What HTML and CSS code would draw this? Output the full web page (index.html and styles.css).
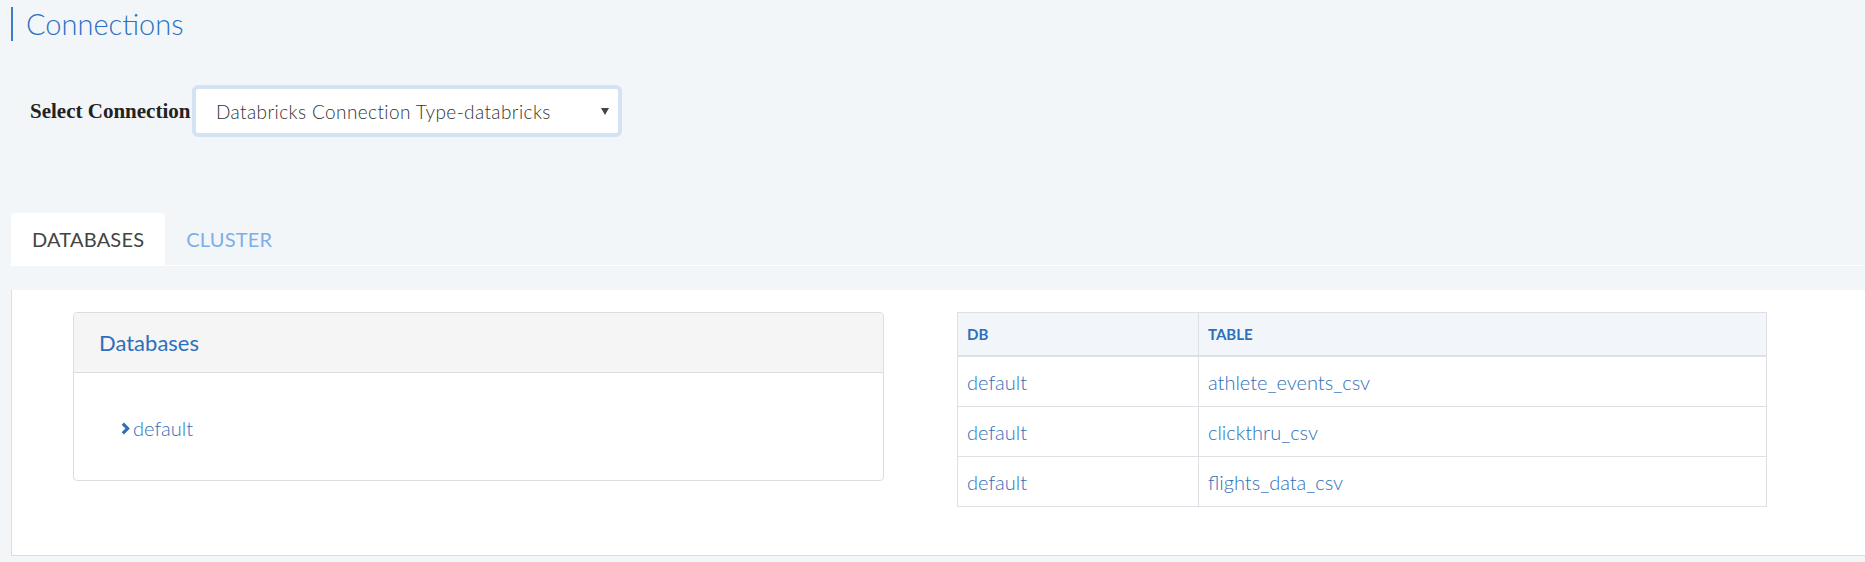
FILE: index.html
```html
<!DOCTYPE html>
<html>
<head>
<meta charset="utf-8">
<link rel="stylesheet" href="styles.css">
</head>
<body>
  <h1 class="page-title">Connections</h1>

  <div class="select-row">
    <label class="select-label">Select Connection</label>
    <div class="select-box">
      <span class="select-value">Databricks Connection Type-databricks</span>
      <svg class="select-arrow" width="8" height="7" viewBox="0 0 8 7"><path d="M0 0 H8 L4 7 Z" fill="#444"/></svg>
    </div>
  </div>

  <div class="tabs">
    <div class="tab active">DATABASES</div>
    <div class="tab">CLUSTER</div>
  </div>

  <div class="panel">
    <div class="card">
      <div class="card-header">Databases</div>
      <div class="card-body">
        <div class="tree-item">
          <svg class="chevron" width="9" height="13" viewBox="0 0 9 13"><path d="M1.8 1.6 L6.6 6.5 L1.8 11.4" fill="none" stroke="#2f6fba" stroke-width="3.2"/></svg><span>default</span>
        </div>
      </div>
    </div>

    <table class="data-table">
      <thead>
        <tr><th class="col-db">DB</th><th>TABLE</th></tr>
      </thead>
      <tbody>
        <tr><td>default</td><td>athlete_events_csv</td></tr>
        <tr><td>default</td><td>clickthru_csv</td></tr>
        <tr><td>default</td><td>flights_data_csv</td></tr>
      </tbody>
    </table>
  </div>
</body>
</html>
```

FILE: styles.css
```css
html, body {
  margin: 0;
  padding: 0;
}
body {
  background: #f3f6f9;
  font-family: Lato, "Open Sans", sans-serif;
  width: 1865px;
  height: 562px;
  overflow: hidden;
}
.page-title {
  margin: 7px 0 0 11px;
  padding-left: 13px;
  border-left: 2px solid #3a7ecb;
  font-weight: 300;
  font-size: 29px;
  line-height: 34px;
  height: 34px;
  color: #2a71c2;
}
.select-row {
  display: flex;
  align-items: center;
  margin-top: 44px;
  padding-left: 30px;
}
.select-label {
  font-family: "Liberation Serif", "Times New Roman", serif;
  font-weight: bold;
  font-size: 21px;
  color: #222;
  width: 162px;
}
.select-box {
  box-sizing: border-box;
  width: 430px;
  height: 52px;
  border: 4px solid #d3e3f3;
  border-radius: 6px;
  background: #fff;
  display: flex;
  align-items: center;
  justify-content: space-between;
  padding: 0 9px 0 20px;
}
.select-value {
  font-size: 19px;
  font-weight: 300;
  letter-spacing: 0.4px;
  color: #333;
}
.tabs {
  display: flex;
  margin: 76px 0 0 11px;
  border-bottom: 1px solid #fff;
}
.tab {
  height: 52px;
  display: flex;
  align-items: center;
  padding: 0 21px;
  font-size: 20px;
  color: #7eaee6;
  letter-spacing: 0.2px;
}
.tab.active {
  background: #fff;
  color: #444;
  border-radius: 4px 4px 0 0;
}
.panel {
  margin: 24px 0 0 11px;
  background: #fff;
  border-left: 1px solid #ddd;
  border-bottom: 1px solid #ddd;
  padding: 22px 0 48px 61px;
  display: grid;
  grid-template-columns: 811px 810px;
  column-gap: 73px;
  align-items: start;
}
.card {
  border: 1px solid #ddd;
  border-radius: 4px;
  overflow: hidden;
}
.card-header {
  height: 60px;
  box-sizing: border-box;
  background: #f5f5f5;
  border-bottom: 1px solid #ddd;
  display: flex;
  align-items: center;
  padding-left: 25px;
  font-size: 22px;
  color: #2f6fba;
}
.card-body {
  height: 107px;
  display: flex;
  align-items: center;
  padding-left: 47px;
  padding-top: 3px;
  box-sizing: border-box;
}
.tree-item {
  display: flex;
  align-items: center;
  font-size: 20px;
  font-weight: 300;
  color: #2f6fba;
}
.chevron {
  margin-right: 3px;
}
.data-table {
  width: 810px;
  border-collapse: collapse;
  border: 1px solid #dde0e5;
}
.data-table th {
  height: 42px;
  background: #f2f6fa;
  border: 1px solid #dde0e5;
  border-bottom: 2px solid #dde0e5;
  text-align: left;
  padding: 0 9px;
  font-size: 15px;
  font-weight: 700;
  color: #2f6fba;
}
.data-table .col-db {
  width: 222px;
}
.data-table td {
  height: 49px;
  border: 1px solid #dde0e5;
  padding: 0 9px;
  font-size: 20px;
  font-weight: 300;
  color: #2f6fba;
}
```
